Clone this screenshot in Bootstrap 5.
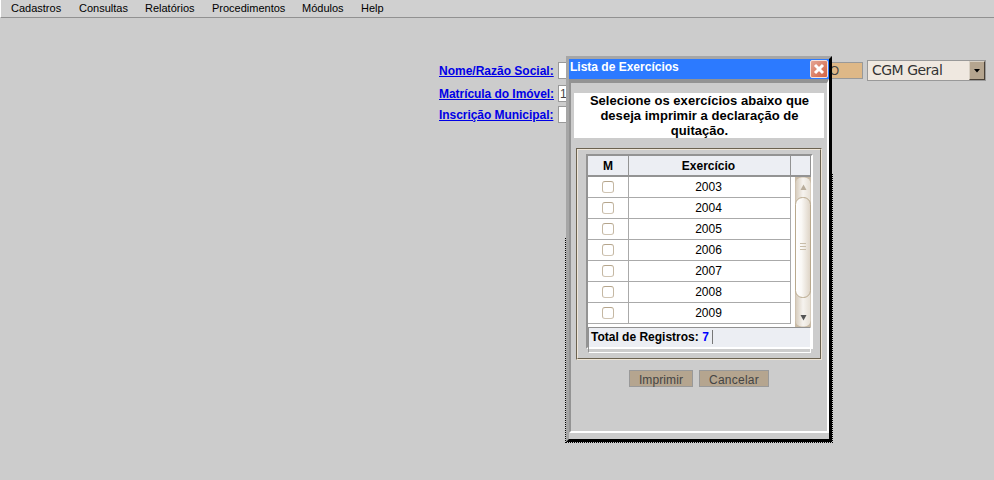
<!DOCTYPE html>
<html lang="pt-BR">
<head>
<meta charset="utf-8">
<title>Lista de Exercícios</title>
<link href="https://cdn.jsdelivr.net/npm/bootstrap@5.3.0/dist/css/bootstrap.min.css" rel="stylesheet">
<style>
body{width:994px;height:480px;overflow:hidden;background:#ccc;color:#000;font:12px/15px "Liberation Sans",Arial,sans-serif}
.menubar{height:18px;background:#d0d0d0;border-bottom:1px solid #919191;border-left:1px solid #fff;padding-left:10px;font-size:11px;line-height:16px}
.menubar a{color:#000;text-decoration:none;white-space:nowrap}
.m-a{width:68px}.m-b{width:66px}.m-c{width:67px}.m-d{width:90px}.m-e{width:59px}
.form-area{padding:42px 8px 0 439px;height:120px}
.field-label{color:#0000e6;font-weight:bold;width:119px;white-space:nowrap;text-decoration:underline}
.label-low{margin-top:2px;letter-spacing:-.05px}
.entry{background:#fff;border:1px solid #999;width:90px;height:17px;padding-left:1px;color:#444;line-height:16px}
.entry-top{margin-top:2px}
.entry-tan{background:#deb887;width:211px;text-align:right;padding-right:23px;margin-right:4px}
.form-line{margin-top:4px}
.picker{width:119px;height:21px;background:#efe8e0;border:1px solid #999;font:14px/18px "DejaVu Sans",sans-serif;letter-spacing:-.5px;color:#333;padding-left:4px}
.picker-arrow{width:16px;height:19px;background:#b5a58f;border:1px solid;border-color:#d8d0c4 #494036 #494036 #d8d0c4}
.ghost{left:565px;top:174px;width:268px;height:269px;border:1px dotted #000;border-top:0}
.ghost-mask{left:565px;top:174px;width:1px;height:64px;background:#ccc}
.win{left:566px;top:56px;width:266px;height:386px;border:3px solid;border-color:#a6a6a6 #000 #000 #a6a6a6;background:#ccc}
.win-title{height:20px;background:#2c7aff;color:#fff;font-weight:bold;padding:1px 1px 0 1px;line-height:14px}
.win-body{height:354px;border:2px solid;border-color:#939393 #fff #fff #939393;border-top-width:4px;padding:10px 3px 0}
.notice{background:#fff;height:45px;width:250px;padding-left:1px;font-size:13px;font-weight:bold;text-align:center;letter-spacing:.03px}
.frame{width:246px;height:212px;margin:10px 0 0 2px;border:1px solid;border-color:#6b6250 #efe6d8 #efe6d8 #6b6250}
.frame-in{height:100%;border:1px solid;border-color:#efe6d8 #6b6250 #6b6250 #efe6d8;padding:4px 0 0 8px}
.grid-box{width:227px;height:195px;border:2px solid;border-color:#939393 #fff #fff #939393;background:#fff}
.grid-head{height:21px;background:#eceef3;border-bottom:2px solid #939393;font-weight:bold;text-align:center;line-height:20px}
.grid-head div{border-right:1px solid #939393}
.c1{width:41px}.c2{width:162px;padding-right:2px}.c3{width:20px}
.grid-row{height:21px;width:203px;border-bottom:1px solid #aaa;text-align:center;line-height:20px}
.grid-row div{border-right:1px solid #aaa}
.tick{width:12px;height:12px;margin:4px 0 0 14px;display:block;border:1px solid;border-color:#b5a58c #c5b8a3 #cfc4b3 #c5b8a3;border-radius:3px;background:#fff}
.rows{height:150px}
.grid-foot{width:223px;height:26px;border:1px solid;border-color:#919191 #fff #fff #919191;background:#ccc}
.total{height:21px;background:#eceef3;border-bottom:2px solid #fff;font-weight:bold;padding-left:2px;line-height:18px}
.total b{color:#00f}
.caret{width:1px;height:14px;background:#777;margin:2px 0 0 3px}
.actions{margin:10px 0 0 55px;gap:6px}
.act{height:17px;border:1px solid #999;background:#b5a58f;color:#444;font-size:12px;line-height:18px;padding:0;text-align:center;border-radius:0;letter-spacing:.25px}
.act-a{width:64px;letter-spacing:.1px}.act-b{width:70px}
</style>
</head>
<body>
<nav class="menubar d-flex">
<a href="#" class="m-a">Cadastros</a><a href="#" class="m-b">Consultas</a><a href="#" class="m-c">Relatórios</a><a href="#" class="m-d">Procedimentos</a><a href="#" class="m-e">Módulos</a><a href="#">Help</a>
</nav>
<main class="form-area">
<div class="d-flex align-items-start">
<a href="#" class="field-label mt-1">Nome/Razão Social:</a><div class="entry entry-top">&nbsp;</div><div class="entry entry-top entry-tan ms-1">DO</div>
<div class="picker d-flex justify-content-between"><span>CGM Geral</span><span class="picker-arrow d-flex align-items-center justify-content-center"><svg width="6" height="4"><path d="M0 0H6L3 3.5Z"/></svg></span></div>
</div>
<div class="d-flex form-line"><a href="#" class="field-label label-low">Matrícula do Imóvel:</a><div class="entry">1</div></div>
<div class="d-flex form-line"><a href="#" class="field-label label-low">Inscrição Municipal:</a><div class="entry">&nbsp;</div></div>
</main>
<div class="ghost position-absolute"></div><div class="ghost-mask position-absolute"></div>
<section class="win position-absolute">
<header class="win-title d-flex justify-content-between"><span>Lista de Exercícios</span>
<svg width="18" height="18" viewBox="0 0 18 18"><defs><linearGradient id="red" x2="1" y2="1"><stop stop-color="#e5a797"/><stop offset="1" stop-color="#d2603f"/></linearGradient></defs><rect x=".5" y=".5" width="17" height="17" rx="1.5" fill="url(#red)" stroke="#f3e3df"/><path d="M5 5L13 13M13 5L5 13" stroke="#fff" stroke-width="3"/></svg></header>
<div class="win-body">
<div class="notice">Selecione os exercícios abaixo que deseja imprimir a declaração de quitação.</div>
<div class="frame"><div class="frame-in"><div class="grid-box">
<div class="grid-head d-flex"><div class="c1">M</div><div class="c2">Exercício</div><div class="c3"></div></div>
<div class="rows d-flex justify-content-between"><div>
<div class="grid-row d-flex"><div class="c1"><span class="tick"></span></div><div class="c2">2003</div></div>
<div class="grid-row d-flex"><div class="c1"><span class="tick"></span></div><div class="c2">2004</div></div>
<div class="grid-row d-flex"><div class="c1"><span class="tick"></span></div><div class="c2">2005</div></div>
<div class="grid-row d-flex"><div class="c1"><span class="tick"></span></div><div class="c2">2006</div></div>
<div class="grid-row d-flex"><div class="c1"><span class="tick"></span></div><div class="c2">2007</div></div>
<div class="grid-row d-flex"><div class="c1"><span class="tick"></span></div><div class="c2">2008</div></div>
<div class="grid-row d-flex"><div class="c1"><span class="tick"></span></div><div class="c2">2009</div></div>
</div>
<svg width="16" height="150" viewBox="0 0 16 150"><defs><linearGradient id="track"><stop stop-color="#d6cbbb"/><stop offset=".5" stop-color="#f6f3ef"/><stop offset="1" stop-color="#e6dfd4"/></linearGradient><linearGradient id="thumb"><stop stop-color="#fff"/><stop offset=".4" stop-color="#faf8f5"/><stop offset="1" stop-color="#ddd3c5"/></linearGradient></defs>
<rect width="16" height="150" fill="#c9bba6"/><rect x=".5" y=".5" width="15" height="149" rx="6" fill="url(#track)"/><rect x=".5" y="20.5" width="15" height="100" rx="7" fill="url(#thumb)" stroke="#b9a98d"/>
<path d="M5.5 13H11.5L8.5 7.5Z" fill="#b9ad9b"/><path d="M5.5 138H11.5L8.5 143.5Z" fill="#555"/><path d="M5 66.5H11M5 69.5H11M5 72.5H11" stroke="#c8bda9"/></svg>
</div>
<div class="grid-foot"><div class="total d-flex"><span>Total de Registros: <b>7</b></span><span class="caret"></span></div></div>
</div></div></div>
<div class="d-flex actions"><button class="act act-a">Imprimir</button><button class="act act-b">Cancelar</button></div>
</div>
</section>
<script src="https://cdn.jsdelivr.net/npm/bootstrap@5.3.0/dist/js/bootstrap.bundle.min.js"></script>
</body>
</html>
